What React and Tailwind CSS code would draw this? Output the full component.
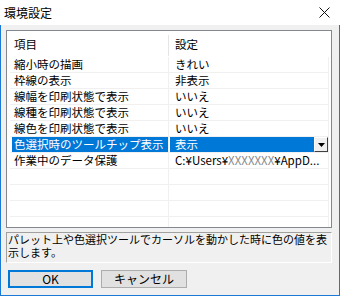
import React from "react";

const FONT = { fontFamily: '"Noto Sans CJK JP", "Noto Sans", sans-serif' };

const rows = [
  ["縮小時の描画", "きれい"],
  ["枠線の表示", "非表示"],
  ["線幅を印刷状態で表示", "いいえ"],
  ["線種を印刷状態で表示", "いいえ"],
  ["線色を印刷状態で表示", "いいえ"],
];

function Row({ a, b }) {
  return (
    <div className="flex h-[16px] border-b border-[#f0f0f0] leading-[15px]">
      <div className="w-[159px] border-r border-[#f0f0f0] pl-[4px] whitespace-nowrap overflow-hidden">{a}</div>
      <div className="flex-1 border-r border-[#f0f0f0] pl-[6px] whitespace-nowrap overflow-hidden">{b}</div>
    </div>
  );
}

export default function App() {
  return (
    <div className="w-[340px] h-[296px] flex flex-col text-[12px] text-black" style={FONT}>
      <div className="h-[25px] bg-white flex items-center justify-between pl-[4px] pr-[10px]">
        <span className="leading-none">環境設定</span>
        <svg width="11" height="11" viewBox="0 0 11 11">
          <path d="M0.5 0.5 L10.5 10.5 M10.5 0.5 L0.5 10.5" stroke="#111" strokeWidth="1" fill="none" />
        </svg>
      </div>
      <div className="flex-1 flex flex-col bg-[#f0f0f0] border-x border-b border-[#1c7ad6]">
        <div className="ml-[5px] mt-[5px] w-[326px] h-[198px] bg-white border border-[#828790] overflow-hidden text-[11.5px]">
          <div className="ml-[3px] w-[319px] flex flex-col">
            <div className="flex h-[26px]">
              <div className="w-[158px] pl-[4px] pt-[6px] leading-[14px]">項目</div>
              <div className="w-px h-[21px] mt-[4px] bg-[#e5e5e5]"></div>
              <div className="flex-1 pl-[6px] pt-[6px] leading-[14px]">設定</div>
            </div>
            {rows.map((r, i) => (
              <Row key={i} a={r[0]} b={r[1]} />
            ))}
            <div className="flex h-[16px] border-b border-[#f0f0f0] leading-[15px]">
              <div className="w-[159px] border-r border-[#f0f0f0] pl-[2px] flex">
                <div className="flex-1 bg-[#0078d7] text-white pl-[2px] whitespace-nowrap overflow-hidden">色選択時のツールチップ表示</div>
              </div>
              <div className="flex-1 border-r border-[#f0f0f0] pl-[1px] flex">
                <div className="flex-1 bg-[#0078d7] text-white pl-[5px] whitespace-nowrap">表示</div>
                <div className="w-[14px] h-[15px] bg-[#f0f0f0] border-t border-l border-[#ffffff] border-r border-b border-r-[#404040] border-b-[#404040] flex items-center justify-center">
                  <svg width="7" height="4" viewBox="0 0 7 4">
                    <path d="M0 0 H7 L3.5 4 Z" fill="#000" />
                  </svg>
                </div>
              </div>
            </div>
            <div className="flex h-[16px] border-b border-[#f0f0f0] leading-[15px]">
              <div className="w-[159px] border-r border-[#f0f0f0] pl-[4px] whitespace-nowrap overflow-hidden">作業中のデータ保護</div>
              <div className="flex-1 border-r border-[#f0f0f0] pl-[6px] whitespace-nowrap overflow-hidden">
                C:¥Users¥<span className="text-[#8a8a8a]">XXXXXXX</span>¥AppD...
              </div>
            </div>
            {[0, 1, 2, 3].map((i) => (
              <div key={i} className="flex h-[16px] border-b border-[#f0f0f0]">
                <div className="w-[159px] border-r border-[#f0f0f0]"></div>
                <div className="flex-1 border-r border-[#f0f0f0]"></div>
              </div>
            ))}
          </div>
        </div>
        <div className="ml-[5px] mt-[4px] w-[326px] h-[31px] border-t border-l border-[#a0a0a0] border-r border-b border-r-white border-b-white bg-[#f0f0f0] pl-[1px] text-[11px] whitespace-nowrap flex flex-col">
          <div className="h-[13px] leading-[13px]">パレット上や色選択ツールでカーソルを動かした時に色の値を表</div>
          <div className="h-[13px] leading-[13px]">示します。</div>
        </div>
        <div className="flex gap-[8px] ml-[7px] mt-[7px]">
          <div className="w-[85px] h-[18px] border-2 border-[#0078d7] bg-[#e1e1e1] flex items-center justify-center leading-none">OK</div>
          <div className="w-[86px] h-[18px] border border-[#adadad] bg-[#e1e1e1] flex items-center justify-center leading-none">キャンセル</div>
        </div>
      </div>
    </div>
  );
}
